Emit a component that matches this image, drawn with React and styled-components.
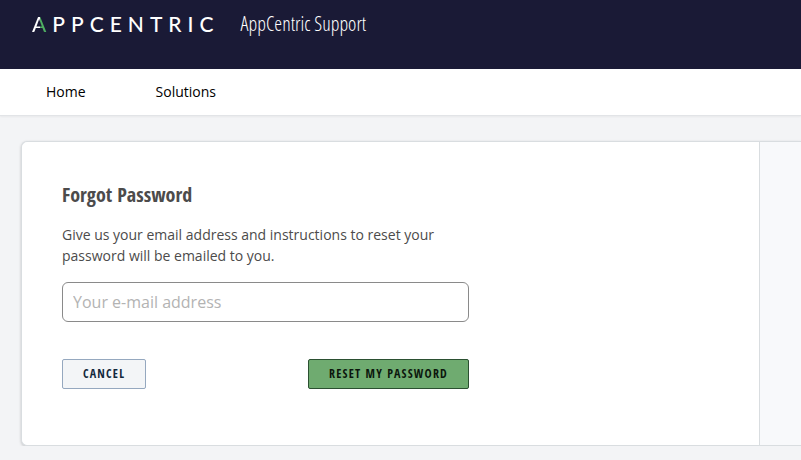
import React from 'react';
import styled, { createGlobalStyle } from 'styled-components';

const GlobalStyle = createGlobalStyle`
    * {
        box-sizing: border-box;
    }

    body {
        margin: 0;
        background-color: #f3f4f6;
        color: #4c4b4b;
        font-family: 'Open Sans', sans-serif;
        font-size: 14px;
        line-height: 21px;
    }
`;

const condensed = "'Open Sans Condensed', 'Open Sans', sans-serif";
const condensedLight = "'Open Sans Condensed Light', 'Open Sans Condensed', 'Open Sans', sans-serif";

const Header = styled.header`
    display: flex;
    align-items: flex-start;
    gap: 21px;
    height: 69px;
    padding: 9px 32px;
    background-color: #1a1a36;
`;

const Logo = styled.a`
    color: #ffffff;
    font-family: Lato, sans-serif;
    font-size: 21px;
    font-weight: 500;
    line-height: 30px;
    letter-spacing: 6px;
    text-decoration: none;
`;

// white left leg, green right leg
const LogoMark = styled.span`
    background: linear-gradient(90deg, #ffffff 38%, #4fae62 38%);
    background-clip: text;
    color: transparent;
`;

const PortalName = styled.h1`
    margin: 0;
    color: #ffffff;
    font-family: ${condensedLight};
    font-size: 20px;
    font-weight: 300;
    line-height: 30px;
`;

const Nav = styled.nav`
    display: flex;
    gap: 70px;
    padding: 12px 46px;
    border-bottom: 1px solid #e2e4e7;
    background-color: #ffffff;
    box-shadow: 0 1px 2px rgba(0, 0, 0, 0.05);
`;

const NavLink = styled.a`
    color: #000000;
    line-height: 22px;
    text-decoration: none;
`;

const Page = styled.main`
    display: flex;
    margin: 25px 0 0 21px;
    border: 1px solid #d9dde0;
    border-right: 0;
    border-radius: 6px 0 0 6px;
    background-color: #f8f9fb;
    box-shadow: 0 1px 3px rgba(0, 0, 0, 0.2);
`;

const Content = styled.section`
    flex: 1;
    padding: 40px 40px 56px;
    border-right: 1px solid #d9dde0;
    border-radius: 6px 0 0 6px;
    background-color: #ffffff;
`;

const Sidebar = styled.aside`
    width: 41px;
`;

const Form = styled.form`
    max-width: 407px;
`;

const Title = styled.h2`
    margin: 0 0 16px;
    font-family: ${condensed};
    font-size: 20px;
    font-weight: 700;
    line-height: 26px;
`;

const Label = styled.label`
    display: block;
    margin-bottom: 16px;
`;

const EmailInput = styled.input`
    display: block;
    width: 100%;
    height: 40px;
    padding: 0 10px;
    border: 1px solid #8a8a8a;
    border-radius: 6px;
    background-color: #ffffff;
    font-family: inherit;
    font-size: 16px;

    &::placeholder {
        color: #b3b3b3;
    }
`;

const Actions = styled.div`
    display: flex;
    justify-content: space-between;
    margin-top: 37px;
`;

const Button = styled.button`
    height: 30px;
    padding: 0 20px 2px;
    border: 1px solid ${props => (props.$primary ? '#2b5031' : '#95a8bf')};
    border-radius: 2px;
    background-color: ${props => (props.$primary ? '#6fab70' : '#f3f5f7')};
    color: ${props => (props.$primary ? '#0b160c' : '#12283c')};
    font-family: ${condensed};
    font-size: 12px;
    font-weight: 700;
    letter-spacing: 0.1em;
    text-transform: uppercase;
`;

const App = () => {
    return (
        <>
            <GlobalStyle />
            <Header>
                <Logo href="#"><LogoMark>A</LogoMark>PPCENTRIC</Logo>
                <PortalName>AppCentric Support</PortalName>
            </Header>
            <Nav>
                <NavLink href="#">Home</NavLink>
                <NavLink href="#">Solutions</NavLink>
            </Nav>
            <Page>
                <Content>
                    <Form>
                        <Title>Forgot Password</Title>
                        <Label htmlFor="email">
                            Give us your email address and instructions to reset your password will be emailed to you.
                        </Label>
                        <EmailInput id="email" type="email" placeholder="Your e-mail address" />
                        <Actions>
                            <Button type="button">Cancel</Button>
                            <Button type="submit" $primary>Reset my password</Button>
                        </Actions>
                    </Form>
                </Content>
                <Sidebar />
            </Page>
        </>
    );
};

export default App;
